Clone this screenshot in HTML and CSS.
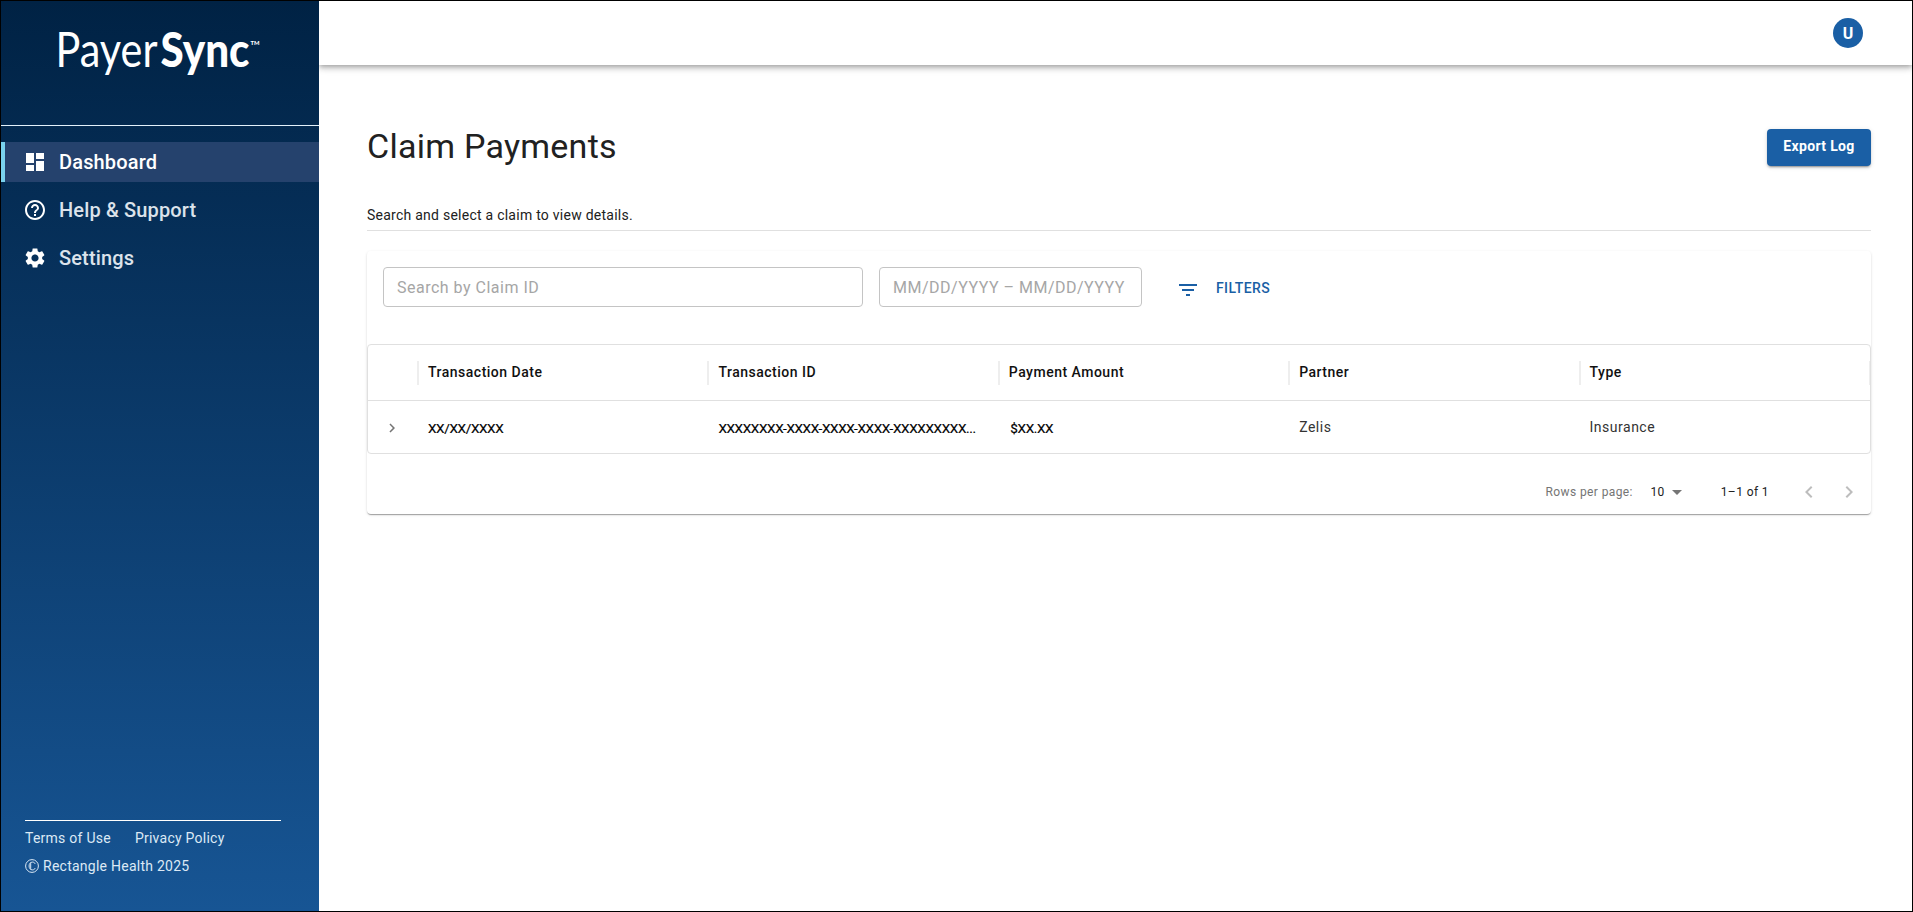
FILE: index.html
```html
<!DOCTYPE html>
<html lang="en">
<head>
    <meta charset="UTF-8">
    <meta name="viewport" content="width=device-width, initial-scale=1.0">
    <title>PayerSync - Claim Payments</title>
    <link rel="stylesheet" href="styles.css">
</head>
<body>
    <div class="app">
        <aside class="sidebar">
            <div class="logo">
                <svg width="220" height="80" viewBox="0 0 220 80">
                    <text class="logo-light" x="10.500" y="49" textLength="102" lengthAdjust="spacingAndGlyphs">Payer</text>
                    <text class="logo-bold" x="115.500" y="49" textLength="89" lengthAdjust="spacingAndGlyphs">Sync</text>
                    <text class="logo-tm" x="205.500" y="26.500" textLength="9" lengthAdjust="spacingAndGlyphs">TM</text>
                </svg>
            </div>
            <nav class="nav">
                <a class="nav-item active">
                    <svg class="icon" viewBox="0 0 24 24"><path d="M3 13h8V3H3v10zm0 8h8v-6H3v6zm10 0h8V11h-8v10zm0-18v6h8V3h-8z"/></svg>
                    <span>Dashboard</span>
                </a>
                <a class="nav-item">
                    <svg class="icon" viewBox="0 0 24 24"><path d="M11 18h2v-2h-2v2zm1-16C6.480 2 2 6.480 2 12s4.480 10 10 10 10-4.480 10-10S17.520 2 12 2zm0 18c-4.410 0-8-3.590-8-8s3.590-8 8-8 8 3.590 8 8-3.590 8-8 8zm0-14c-2.210 0-4 1.790-4 4h2c0-1.100.9-2 2-2s2 .9 2 2c0 2-3 1.750-3 5h2c0-2.250 3-2.500 3-5 0-2.210-1.790-4-4-4z"/></svg>
                    <span>Help &amp; Support</span>
                </a>
                <a class="nav-item">
                    <svg class="icon" viewBox="0 0 24 24"><path d="M19.140 12.940c.04-.3.060-.61.060-.94 0-.32-.02-.64-.07-.94l2.030-1.580c.18-.14.230-.41.120-.61l-1.920-3.320c-.12-.22-.37-.29-.59-.22l-2.390.96c-.5-.38-1.030-.7-1.620-.94l-.36-2.540c-.04-.24-.24-.41-.48-.41h-3.840c-.24 0-.43.17-.47.410l-.36 2.540c-.59.240-1.130.57-1.620.94l-2.390-.96c-.22-.08-.47 0-.59.220L2.740 8.870c-.12.210-.08.470.12.610l2.030 1.580c-.05.3-.09.630-.09.94s.02.640.07.940l-2.030 1.580c-.18.140-.23.410-.12.610l1.920 3.320c.12.220.37.290.59.220l2.390-.96c.5.380 1.030.7 1.620.94l.36 2.540c.05.240.24.410.48.410h3.840c.24 0 .44-.17.470-.41l.36-2.540c.59-.24 1.130-.56 1.620-.94l2.390.96c.22.080.47 0 .59-.22l1.920-3.320c.12-.22.070-.47-.12-.61l-2.010-1.580zM12 15.600c-1.980 0-3.600-1.620-3.600-3.600s1.620-3.600 3.600-3.600 3.600 1.620 3.600 3.600-1.620 3.600-3.600 3.600z"/></svg>
                    <span>Settings</span>
                </a>
            </nav>
            <footer class="sidebar-footer">
                <div class="footer-links">
                    <a class="terms">Terms of Use</a>
                    <a class="privacy">Privacy Policy</a>
                </div>
                <div class="copyright">
                    <svg class="copy-icon" viewBox="0 0 14 14"><circle cx="7" cy="7" r="6.4"/><path d="M10.200 4.900C9.700 3.700 8.700 3.100 7.500 3.100 5.300 3.100 4.100 4.700 4.100 7s1.200 3.900 3.400 3.900c1.200 0 2.200-.6 2.700-1.800M5.700 4.200v5.600"/></svg>
                    <span>Rectangle Health 2025</span>
                </div>
            </footer>
        </aside>

        <div class="page">
            <header class="topbar">
                <div class="avatar">U</div>
            </header>

            <main class="content">
                <div class="title-row">
                    <h1>Claim Payments</h1>
                    <button class="export-btn">Export Log</button>
                </div>
                <p class="subtitle">Search and select a claim to view details.</p>

                <section class="card">
                    <div class="toolbar">
                        <input type="text" class="search" placeholder="Search by Claim ID">
                        <input type="text" class="dates" placeholder="MM/DD/YYYY – MM/DD/YYYY">
                        <button class="filters-btn">
                            <svg class="icon" viewBox="0 0 24 24"><path d="M10 18h4v-2h-4v2zM3 6v2h18V6H3zm3 7h12v-2H6v2z"/></svg>
                            <span>FILTERS</span>
                        </button>
                    </div>

                    <div class="table">
                        <div class="table-row table-head">
                            <div class="cell"></div>
                            <div class="cell">Transaction Date</div>
                            <div class="cell">Transaction ID</div>
                            <div class="cell">Payment Amount</div>
                            <div class="cell">Partner</div>
                            <div class="cell">Type</div>
                        </div>
                        <div class="table-row table-body">
                            <div class="cell expand">
                                <svg viewBox="0 0 24 24"><path d="M10 6 8.590 7.410 13.170 12l-4.580 4.590L10 18l6-6z"/></svg>
                            </div>
                            <div class="cell masked">XX/XX/XXXX</div>
                            <div class="cell masked">XXXXXXXX-XXXX-XXXX-XXXX-XXXXXXXXX...</div>
                            <div class="cell masked amount">$XX.XX</div>
                            <div class="cell">Zelis</div>
                            <div class="cell">Insurance</div>
                        </div>
                    </div>

                    <div class="pagination">
                        <span class="rows-label">Rows per page:</span>
                        <span class="rows-count">10</span>
                        <svg class="caret" viewBox="0 0 24 24"><path d="M7 10l5 5 5-5z"/></svg>
                        <span class="range">1–1 of 1</span>
                        <svg class="pager prev" viewBox="0 0 24 24"><path d="M15.410 7.410 14 6l-6 6 6 6 1.410-1.410L10.830 12z"/></svg>
                        <svg class="pager" viewBox="0 0 24 24"><path d="M10 6 8.590 7.410 13.170 12l-4.580 4.590L10 18l6-6z"/></svg>
                    </div>
                </section>
            </main>
        </div>
    </div>
</body>
</html>
```
FILE: styles.css
```css
* {
    box-sizing: border-box;
}
body {
    margin: 0;
    font-family: Roboto, "Liberation Sans", sans-serif;
    font-size: 14px;
    color: #212121;
    background: #fff;
}
svg {
    display: block;
    flex-shrink: 0;
}
.app {
    display: flex;
    height: 100vh;
    border: 1px solid #000;
    overflow: hidden;
}
.icon {
    width: 24px;
    height: 24px;
    fill: currentColor;
}

/* sidebar */
.sidebar {
    display: flex;
    flex-direction: column;
    width: 318px;
    flex-shrink: 0;
    background: linear-gradient(#002244, #175594);
    color: #fff;
}
.logo {
    height: 125px;
    padding: 17px 0 0 44px;
    border-bottom: 1px solid #e3f1fb;
}
.logo text {
    fill: #fff;
    font-family: Lato, sans-serif;
}
.logo .logo-light {
    font-size: 48px;
}
.logo .logo-bold {
    font-size: 48px;
    font-weight: 900;
}
.logo .logo-tm {
    font-size: 6px;
    font-weight: 900;
}
.nav {
    display: flex;
    flex-direction: column;
    gap: 8px;
    padding-top: 16px;
}
.nav-item {
    display: flex;
    align-items: center;
    gap: 12px;
    height: 40px;
    padding-left: 18px;
    border-left: 4px solid transparent;
    font-size: 20px;
    font-weight: 500;
    letter-spacing: 0.15px;
    color: #dce3eb;
}
.nav-item .icon {
    color: #fff;
}
.nav-item.active {
    background: #25426d;
    background-clip: padding-box;
    border-left-color: #79d2ee;
    color: #fff;
}
.sidebar-footer {
    margin: auto 38px 35px 24px;
    padding-top: 7px;
    border-top: 1px solid #fff;
    color: #dce9f5;
    line-height: 20px;
}
.footer-links {
    display: flex;
    gap: 24px;
    letter-spacing: 0.25px;
}
.copyright {
    display: flex;
    align-items: center;
    gap: 4px;
    margin-top: 8px;
    letter-spacing: 0.25px;
}
.copy-icon {
    width: 14px;
    height: 14px;
    fill: none;
    stroke: currentColor;
}

/* page */
.page {
    display: flex;
    flex-direction: column;
    flex: 1;
    min-width: 0;
}
.topbar {
    display: flex;
    justify-content: flex-end;
    align-items: center;
    height: 64px;
    padding-right: 49px;
    box-shadow: 0 2px 4px -1px rgba(0, 0, 0, 0.2), 0 4px 5px rgba(0, 0, 0, 0.14), 0 1px 10px rgba(0, 0, 0, 0.12);
    clip-path: inset(0 0 -20px 0);
}
.avatar {
    width: 30px;
    height: 30px;
    padding-top: 1px;
    border-radius: 50%;
    background: #1a5fa5;
    color: #fff;
    font-size: 16px;
    font-weight: 700;
    line-height: 30px;
    text-align: center;
}
.content {
    padding: 60px 41px 0 48px;
}
.title-row {
    display: flex;
    justify-content: space-between;
    align-items: flex-start;
    height: 80px;
}
h1 {
    margin: 0;
    font-size: 34px;
    font-weight: 400;
    line-height: 42px;
    letter-spacing: 0.25px;
}
.export-btn {
    width: 104px;
    height: 37px;
    margin-top: 4px;
    padding: 0 0 4px;
    border: none;
    border-radius: 4px;
    background: #1a5fa5;
    color: #fff;
    font: 700 14px/20px Roboto, sans-serif;
    letter-spacing: 0.35px;
    box-shadow: 0 3px 1px -2px rgba(0, 0, 0, 0.2), 0 2px 2px rgba(0, 0, 0, 0.14), 0 1px 5px rgba(0, 0, 0, 0.12);
}
.subtitle {
    height: 26px;
    margin: 0 0 20px;
    border-bottom: 1px solid #e0e0e0;
    line-height: 20px;
    letter-spacing: 0.25px;
}
.card {
    height: 263px;
    padding-top: 16px;
    border-radius: 4px;
    box-shadow: 0 2px 1px -1px rgba(0, 0, 0, 0.2), 0 1px 1px rgba(0, 0, 0, 0.14), 0 1px 3px rgba(0, 0, 0, 0.12);
}
.toolbar {
    display: flex;
    gap: 16px;
    height: 77px;
    padding-left: 16px;
}
.toolbar input {
    height: 40px;
    padding: 0 13px;
    border: 1px solid #c4c4c4;
    border-radius: 4px;
    background: none;
    font: 16px Roboto, sans-serif;
    letter-spacing: 0.5px;
}
.toolbar input::placeholder {
    color: #a6a6a6;
}
.search {
    width: 480px;
}
.dates {
    width: 263px;
}
.filters-btn {
    display: flex;
    align-items: center;
    gap: 16px;
    height: 42px;
    padding: 0 0 0 18px;
    border: none;
    background: none;
    color: #1a5fa5;
    font: 500 14px Roboto, sans-serif;
    letter-spacing: 0.4px;
}
.filters-btn .icon {
    margin-top: 4px;
}

/* table */
.table {
    height: 110px;
    border: 1px solid #e0e0e0;
    border-radius: 4px;
    overflow: hidden;
}
.table-row {
    display: grid;
    grid-template-columns: 51px repeat(5, 290.4px);
    align-items: center;
}
.cell {
    padding-left: 9px;
    white-space: nowrap;
    letter-spacing: 0.5px;
}
.table-head {
    height: 56px;
    border-bottom: 1px solid #e0e0e0;
    font-weight: 500;
    color: #111;
}
.table-head .cell {
    height: 24px;
    line-height: 22px;
    border-right: 2px solid #eee;
}
.table-body {
    height: 53px;
    color: #333;
}
.table-body .cell {
    padding-bottom: 2px;
}
.table-body .masked {
    padding-bottom: 0;
    font-size: 13.5px;
    font-weight: 400;
    color: #000;
    letter-spacing: -0.35px;
    -webkit-text-stroke: 0.2px #000;
}
.table-body .amount {
    padding-left: 10.5px;
}
.table-body .expand {
    padding: 0 0 0 15px;
}
.expand svg {
    width: 18px;
    height: 18px;
    fill: #757575;
}
.pagination {
    display: flex;
    align-items: center;
    justify-content: flex-end;
    height: 52px;
    margin-top: 12px;
    padding-right: 10px;
    font-size: 12px;
    letter-spacing: 0.4px;
}
.rows-label {
    margin-right: 17.5px;
    color: #757575;
}
.caret {
    width: 24px;
    height: 24px;
    fill: #757575;
}
.range {
    margin: 0 28px 0 32px;
}
.pager {
    width: 24px;
    height: 24px;
    fill: #bdbdbd;
}
.prev {
    margin-right: 16px;
}
```
